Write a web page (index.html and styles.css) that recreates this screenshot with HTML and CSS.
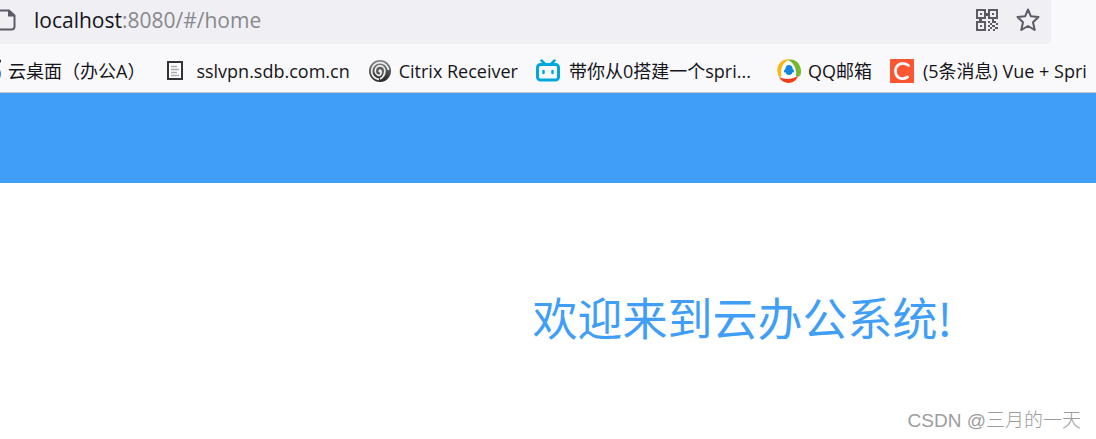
FILE: index.html
```html
<!DOCTYPE html>
<html lang="zh-CN">
<head>
<meta charset="utf-8">
<title>云办公系统</title>
<link rel="stylesheet" href="styles.css">
</head>
<body>
<div class="toolbar">
  <div class="address">
    <svg class="page-icon" viewBox="0 0 22 22" aria-hidden="true"><path d="M3 1.500h12l5.500 5v11a3 3 0 0 1-3 3H3" fill="none" stroke="#5b5b66" stroke-width="2"/><path d="M14 1v6.500h7z" fill="#5b5b66"/></svg>
    <a class="url" href="#/home"><span class="host">localhost</span>:8080/#/home</a>
    <button class="tool" type="button" aria-label="二维码">
      <svg width="22" height="22" viewBox="0 0 22 22" fill="#5b5b66">
        <path fill-rule="evenodd" d="M0 0h10v4h2V0h10v10h-4v2h-2v-2h-4V7h-2v3H6v2h4v10H0V12h3v-2H0zM2 2v6h6V2zM14 2v6h6V2zM2 14v6h6v-6z"/>
        <path d="M4 4h2v2H4zM16 4h2v2h-2zM4 16h2v2H4zM12 12h2v2h-2zM18 12h2v2h-2zM14 14h2v2h-2zM16 12h2v2h-2zM20 14h2v2h-2zM12 16h2v2h-2zM16 16h3v2h-3zM14 18h2v2h-2zM19 18h3v2h-3zM12 20h2v2h-2zM17 20h2v2h-2z"/>
      </svg>
    </button>
    <button class="tool" type="button" aria-label="收藏">
      <svg width="24" height="24" viewBox="0 0 24 24"><path d="M12 1.500 14.900 8.300 22.500 9 17 14.300 18.700 22 12 18 5.300 22 7 14.300 1.500 9 9.100 8.300z" fill="none" stroke="#5b5b66" stroke-width="2" stroke-linejoin="round"/></svg>
    </button>
  </div>
  <nav class="bookmarks">
    <a class="bookmark" href="#"><svg class="icon" viewBox="0 0 24 24"><circle cx="16" cy="15" r="8" fill="#2f7cf6"/><circle cx="22" cy="2" r="2" fill="#222"/></svg>云桌面（办公A）</a>
    <a class="bookmark" href="#"><svg class="icon" viewBox="0 0 24 24"><rect x="5" y="3" width="14" height="17" fill="#fff" stroke="#333" stroke-width="2"/><path d="M8 7.500h6M8 10.500h8M8 13.500h6M8 16.500h8" stroke="#aaa" stroke-width="1.500"/></svg><span class="label-inset">sslvpn.sdb.com.cn</span></a>
    <a class="bookmark" href="#"><svg class="icon" viewBox="0 0 24 24"><defs><linearGradient id="disc" x2="0" y2="1"><stop stop-color="#888"/><stop offset="1" stop-color="#222"/></linearGradient></defs><circle cx="12" cy="12" r="11" fill="url(#disc)"/><path d="M11 20.500A8.500 8.500 0 1 1 20.500 11M11.500 16.500a4.800 4.800 0 1 1 5.300-4.500c0 4-2 6.500-4.800 8M12 12c2 0 1.500 3-.5 4.500" fill="none" stroke="#eee" stroke-width="1.800"/><circle cx="12" cy="12" r="1.700" fill="#eee"/></svg>Citrix Receiver</a>
    <a class="bookmark" href="#"><svg class="icon" viewBox="0 0 24 24" fill="none" stroke="#00a7de" stroke-linecap="round"><rect x="1.500" y="5.500" width="21" height="15.500" rx="3" stroke-width="3"/><path d="m5.500 1.500 3 3M18.500 1.500l-3 3" stroke-width="2.500"/><path d="M7.500 12v2M16.500 12v2" stroke-width="2.500"/></svg><span class="label-inset label-long">带你从0搭建一个spri...</span></a>
    <a class="bookmark" href="#"><svg class="icon" viewBox="0 0 24 24"><circle cx="12" cy="12" r="10" fill="#fff"/><path d="M2 18C-3 8 4-1 13 .5 6 3 3 9 4.500 17z" fill="#fdb515"/><path d="M11 1c8-3 15 6 12.500 15C22 18 20 18 19 17 20 10 17 4 11 1z" fill="#72b92b"/><path d="M2 18c5 2.500 12 3 19-1-3 9-15 9-19 1z" fill="#f43b17"/><path d="M12 6c-2.500 0-3.500 1.800-3.500 3.500-2 2-2 4-1 4l1-.5c0 1.500 1 3 3.500 3s3.500-1.500 3.500-3l1 .5c1 0 1-2-1-4C15.500 7.800 14.500 6 12 6z" fill="#1686d9"/></svg>QQ邮箱</a>
    <a class="bookmark" href="#"><svg class="icon" viewBox="0 0 24 24"><path d="M0 0h24v24H0z" fill="#fc5531"/><path d="M18.500 6.500C13 2 5.500 5 5.500 12s6.500 9.500 12 6" fill="none" stroke="#fff" stroke-width="2.800" stroke-linecap="round"/></svg><span class="label-inset">(5条消息) Vue + Spri</span></a>
  </nav>
</div>
<header class="banner"></header>
<main class="content">
  <h1 class="welcome">欢迎来到云办公系统!</h1>
</main>
<footer class="watermark">CSDN @三月的一天</footer>
</body>
</html>
```
FILE: styles.css
```css
* { box-sizing: border-box; }
body {
  margin: 0;
  min-height: 100vh;
  display: flex;
  flex-direction: column;
  background: #fff;
  font-family: "Open Sans", "Noto Sans CJK SC", sans-serif;
}
.toolbar {
  background: #f9f9fb;
  border-bottom: 1px solid #c8c8c8;
}
.address {
  display: flex;
  align-items: center;
  gap: 18px;
  height: 44px;
  margin-right: 45px;
  padding: 0 11px 4px 0;
  background: #f0f0f4;
  border-radius: 0 0 5px 0;
}
.page-icon {
  width: 22px;
  height: 22px;
  margin-left: -6px;
  flex: none;
}
.url {
  flex: 1;
  color: #88888d;
  font-size: 21px;
  line-height: 30px;
  text-decoration: none;
}
.host { color: #15141a; }
.tool {
  display: flex;
  padding: 0;
  border: 0;
  background: none;
}
.bookmarks {
  display: flex;
  align-items: center;
  gap: 18px;
  height: 48px;
  margin-left: -23px;
  padding-top: 6px;
  overflow: hidden;
}
.bookmark {
  display: flex;
  flex: none;
  align-items: center;
  gap: 7px;
  color: #15141a;
  font-size: 18px;
  line-height: 28px;
  white-space: nowrap;
  text-decoration: none;
}
.icon {
  width: 24px;
  height: 24px;
  flex: none;
}
.label-inset { padding-left: 2px; }
.label-long { min-width: 192px; }
.banner {
  height: 90px;
  background: #409ef8;
}
.content {
  flex: 1;
  display: flex;
  justify-content: flex-end;
  padding: 104px 144px 0 0;
}
.welcome {
  margin: 0;
  color: #409ef8;
  font-family: KaiTi, STKaiti, "Noto Sans CJK SC", serif;
  font-size: 45px;
  font-weight: 400;
  line-height: 60px;
}
.watermark {
  padding: 0 15px 4px 0;
  color: #9c9c9c;
  font-family: "Liberation Sans", "Noto Sans CJK SC", sans-serif;
  font-size: 19px;
  font-weight: 300;
  line-height: 28px;
  text-align: right;
}
```
